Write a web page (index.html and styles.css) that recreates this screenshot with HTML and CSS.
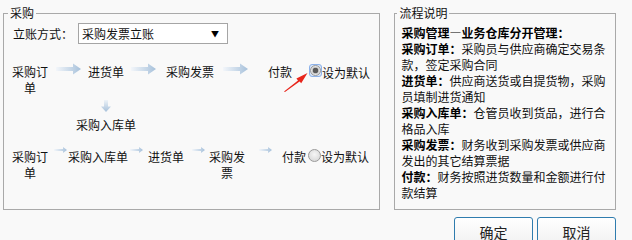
FILE: index.html
```html
<!DOCTYPE html>
<html lang="zh-CN">
<head>
  <meta charset="utf-8">
  <title>采购流程设置</title>
  <link rel="stylesheet" href="styles.css">
</head>
<body>
  <!-- shared gradients for the flow arrows -->
  <svg class="defs" width="0" height="0" aria-hidden="true">
    <defs>
      <linearGradient id="arrowH" x1="0" y1="0" x2="1" y2="0">
        <stop offset="0" stop-color="#f3f6fa"/>
        <stop offset="0.6" stop-color="#c6d7e8"/>
        <stop offset="1" stop-color="#a6c0da"/>
      </linearGradient>
      <linearGradient id="arrowV" x1="0" y1="0" x2="0" y2="1">
        <stop offset="0" stop-color="#eef3f8"/>
        <stop offset="1" stop-color="#a6c0da"/>
      </linearGradient>
    </defs>
  </svg>

  <div class="dialog">
    <div class="panels">
      <!-- PURCHASE FLOW -->
      <fieldset class="box purchase">
        <legend>采购</legend>
        <div class="mode">
          <span class="mode-label">立账方式：</span>
          <div class="select"><span>采购发票立账</span><span class="caret">▼</span></div>
        </div>

        <div class="flow flow-first">
          <div class="node w36">采购订单</div>
          <svg class="arrow arrow-big m8" width="25" height="12" viewBox="0 0 25 12"><path d="M0 4H17V0.5L25 6L17 11.5V8H0Z" fill="url(#arrowH)"/></svg>
          <div class="node branch m7">
            <span>进货单</span>
            <svg class="arrow-down" width="10" height="12" viewBox="0 0 10 12"><path d="M3 0H7V6.5H10L5 12L0 6.5H3Z" fill="url(#arrowV)"/></svg>
            <span class="sub">采购入库单</span>
          </div>
          <svg class="arrow arrow-big m7" width="25" height="12" viewBox="0 0 25 12"><path d="M0 4H17V0.5L25 6L17 11.5V8H0Z" fill="url(#arrowH)"/></svg>
          <div class="node m10">采购发票</div>
          <svg class="arrow arrow-big m9" width="25" height="12" viewBox="0 0 25 12"><path d="M0 4H17V0.5L25 6L17 11.5V8H0Z" fill="url(#arrowH)"/></svg>
          <div class="node m20">付款</div>
          <label class="default m17"><span class="focus"><input type="radio" name="flow" checked></span>设为默认</label>
          <svg class="pointer" width="26" height="20" viewBox="0 0 26 20"><path d="M1 19.5L15 8.6L13.4 6.6L24.5 1L18.2 11.3L16.6 9.4L2 20Z" fill="#e8261c"/></svg>
        </div>

        <div class="flow flow-second">
          <div class="node w36">采购订单</div>
          <svg class="arrow arrow-small m6" width="13" height="6" viewBox="0 0 13 6"><path d="M0 2H9V0L13 3L9 6V4H0Z" fill="url(#arrowH)"/></svg>
          <div class="node m1">采购入库单</div>
          <svg class="arrow arrow-small m2" width="13" height="6" viewBox="0 0 13 6"><path d="M0 2H9V0L13 3L9 6V4H0Z" fill="url(#arrowH)"/></svg>
          <div class="node m5">进货单</div>
          <svg class="arrow arrow-small m8" width="13" height="6" viewBox="0 0 13 6"><path d="M0 2H9V0L13 3L9 6V4H0Z" fill="url(#arrowH)"/></svg>
          <div class="node w36 m4">采购发票</div>
          <svg class="arrow arrow-small m14" width="13" height="6" viewBox="0 0 13 6"><path d="M0 2H9V0L13 3L9 6V4H0Z" fill="url(#arrowH)"/></svg>
          <div class="node m10">付款</div>
          <label class="default m2"><input type="radio" name="flow">设为默认</label>
        </div>
      </fieldset>

      <!-- NOTES -->
      <fieldset class="box notes">
        <legend>流程说明</legend>
        <p><b>采购管理—业务仓库分开管理：</b></p>
        <p><b>采购订单：</b>采购员与供应商确定交易条款，签定采购合同</p>
        <p><b>进货单：</b>供应商送货或自提货物，采购员填制进货通知</p>
        <p><b>采购入库单：</b>仓管员收到货品，进行合格品入库</p>
        <p><b>采购发票：</b>财务收到采购发票或供应商发出的其它结算票据</p>
        <p><b>付款：</b>财务按照进货数量和金额进行付款结算</p>
      </fieldset>
    </div>

    <div class="actions">
      <button>确定</button>
      <button>取消</button>
    </div>
  </div>
</body>
</html>
```

FILE: styles.css
```css
/* --- Layout & Basics --- */
*{box-sizing:border-box}
body{margin:0;background:#f9f9f9;color:#111;font-family:"Noto Sans CJK SC","Microsoft YaHei",sans-serif;font-size:12px;line-height:16px;overflow:hidden}
.defs{position:absolute}
.dialog{padding:5px 16px 0 3px}
.panels{display:flex;gap:14px}

/* --- Group boxes --- */
.box{margin:0;border:1px solid #a9a9a9;min-width:0}
.box legend{padding:0 2px;margin-left:-4px;line-height:16px}
.purchase{width:378px;padding:2px 8px 0 8px}
.notes{width:222px;padding:4px 5px 8px 6px}

/* --- Mode select --- */
.mode{display:flex;align-items:center;padding-left:1px}
.mode-label{width:65px}
.select{width:150px;height:21px;display:flex;align-items:center;justify-content:space-between;padding:0 8px 0 3px;background:#fff;border:1px solid #a5a5a5}
.caret{font-size:8px;color:#000}

/* --- Flow rows --- */
.flow{display:flex;align-items:flex-start;position:relative}
.flow-first{margin-top:20px}
.flow-second{margin-top:16px}
.node{text-align:center;flex:none}
.w36{width:36px}
.branch{width:36px;display:flex;flex-direction:column;align-items:center}
.arrow-down{margin-top:20px;flex:none}
.sub{margin-top:5px;white-space:nowrap}
.arrow{flex:none}
.arrow-big{margin-top:-1px}
.arrow-small{margin-top:-2px}
.m1{margin-left:1px}.m2{margin-left:2px}.m4{margin-left:4px}.m5{margin-left:5px}
.m6{margin-left:6px}.m7{margin-left:7px}.m8{margin-left:8px}.m9{margin-left:9px}
.m10{margin-left:10px}.m14{margin-left:14px}.m17{margin-left:17px}.m20{margin-left:20px}

/* --- Radio --- */
.default{display:flex;align-items:flex-start;white-space:nowrap;flex:none}
.default input{appearance:none;margin:0;width:13px;height:13px;border-radius:50%;border:1px solid #9a9a9a;background:radial-gradient(circle at 50% 40%,#f6f6f6,#d2d2d2)}
.default input:checked{background:radial-gradient(circle,#5a5a5a 0 2.6px,#bdbdbd 3px,#e6e6e6 4px,#cfcfcf 6px)}
.flow-first .default{margin-top:1px}
.flow-first .default .focus{margin-top:-1px}
.focus{display:flex;padding:0;border:1px solid #8db2ea;border-radius:3px;background:#d6e4f8;margin-right:0}
.focus input{width:11px;height:11px}
.pointer{position:absolute;left:271px;top:8px}

/* --- Notes --- */
.notes p{margin:0}
.notes b{color:#000}

/* --- Buttons --- */
.actions{display:flex;justify-content:flex-end;gap:4px;margin-top:7px}
.actions button{width:79px;height:30px;font:14px/20px "Noto Sans CJK SC","Microsoft YaHei",sans-serif;color:#222;background:linear-gradient(#ffffff,#f1f1f1);border:1px solid #2f7cae;border-radius:3px;padding:0}
```
